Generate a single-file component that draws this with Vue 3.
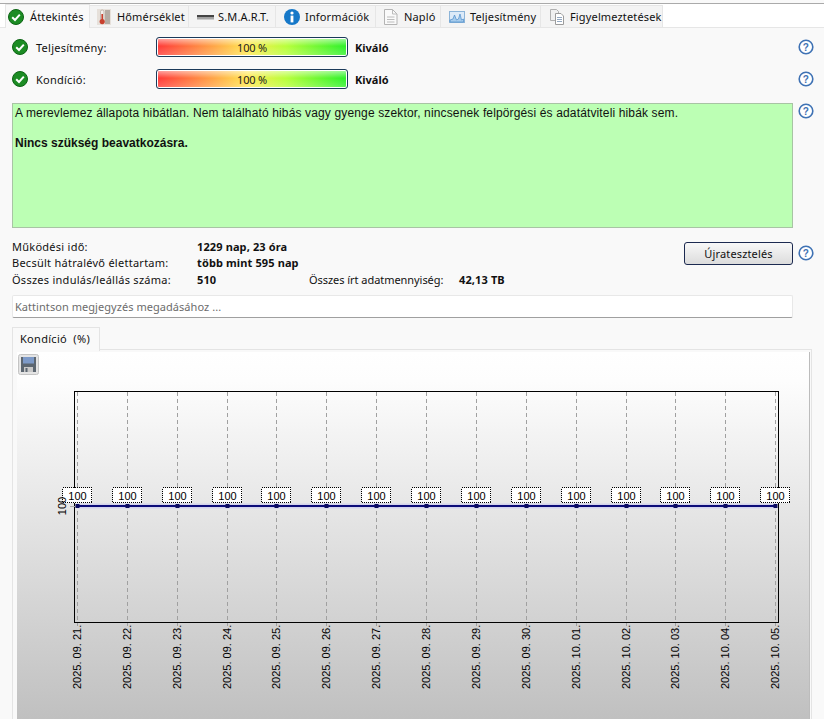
<script setup>
const tabs = [
  { label: 'Áttekintés', icon: 'ok', active: true },
  { label: 'Hőmérséklet', icon: 'temp' },
  { label: 'S.M.A.R.T.', icon: 'smart' },
  { label: 'Információk', icon: 'info' },
  { label: 'Napló', icon: 'doc' },
  { label: 'Teljesítmény', icon: 'perf' },
  { label: 'Figyelmeztetések', icon: 'copy' }
]
const rows = [{ label: 'Teljesítmény:' }, { label: 'Kondíció:' }]
const dates = ['2025. 09. 21.', '2025. 09. 22.', '2025. 09. 23.', '2025. 09. 24.', '2025. 09. 25.', '2025. 09. 26.', '2025. 09. 27.', '2025. 09. 28.', '2025. 09. 29.', '2025. 09. 30.', '2025. 10. 01.', '2025. 10. 02.', '2025. 10. 03.', '2025. 10. 04.', '2025. 10. 05.']
const xs = dates.map((_, i) => Math.round(60 + i * 49.87))
</script>

<template>
  <div class="page">
    <div class="tabbar">
      <div v-for="t in tabs" :key="t.label" class="tab" :class="[{ active: t.active }, 'tab-' + t.icon]">
        <svg v-if="t.icon === 'ok'" class="ico" viewBox="0 0 16 16"><circle cx="8" cy="8" r="7.5" fill="#1c8c24"/><circle cx="8" cy="8" r="7.5" fill="none" stroke="#0d6414"/><path d="M4.2 8.2 7 11l4.8-5.4" fill="none" stroke="#fff" stroke-width="2"/></svg>
        <svg v-else-if="t.icon === 'temp'" class="ico" viewBox="0 0 16 16"><rect x="1" y="0" width="14" height="16" fill="#e6e0da"/><rect x="9" y="1" width="5" height="14" fill="#b4aca4"/><rect x="4.5" y="1" width="3.4" height="11" rx="1.6" fill="#f4f0ec" stroke="#a89a90" stroke-width=".6"/><rect x="5.4" y="5" width="1.6" height="7" fill="#c8402e"/><circle cx="6.2" cy="12.6" r="2.6" fill="#c8402e"/></svg>
        <svg v-else-if="t.icon === 'smart'" class="ico" viewBox="0 0 16 16"><rect x="0" y="6" width="17" height="2.5" fill="#444"/><rect x="0" y="8.500" width="17" height="2" fill="#a4a4a4"/></svg>
        <svg v-else-if="t.icon === 'info'" class="ico" viewBox="0 0 16 16"><circle cx="8" cy="8" r="8" fill="#1678c8"/><circle cx="8" cy="4" r="1.6" fill="#fff"/><rect x="6.6" y="6.6" width="2.8" height="6.8" fill="#fff"/></svg>
        <svg v-else-if="t.icon === 'doc'" class="ico" viewBox="0 0 16 16"><path d="M1.500.5h8l4.500 4.500v10.500h-12.500z" fill="#fafafa" stroke="#b4b4b4"/><path d="M9.500.5v4.500h4.500M4 8h7.500M4 10.500h7.500M4 13h7.500" fill="none" stroke="#bcbcbc"/></svg>
        <svg v-else-if="t.icon === 'perf'" class="ico" viewBox="0 0 16 16"><rect x=".5" y="2.5" width="15" height="11" fill="#dceaf8" stroke="#8cb4d8"/><path d="M1 13V11l3-1 1.500-4 2 5 2-1 1.500-5 1.500 6 2-1v3z" fill="#a8ccec" stroke="#4a8ccc" stroke-width=".7"/></svg>
        <svg v-else class="ico" viewBox="0 0 16 16"><path d="M1.500.5h6l2 2v9h-8z" fill="#f0f0f0" stroke="#b0b0b0"/><path d="M6.500 4.500h5.500l2.500 2.500v8.500h-8z" fill="#fff" stroke="#9c9c9c"/><path d="M8 8.500h5M8 10.500h5M8 12.500h5" stroke="#94a8c0"/></svg>
        <span>{{ t.label }}</span>
      </div>
    </div>

    <div class="body">
      <div v-for="r in rows" :key="r.label" class="rate">
        <svg class="ok" viewBox="0 0 16 16"><circle cx="8" cy="8" r="7.500" fill="#1c8c24"/><circle cx="8" cy="8" r="7.500" fill="none" stroke="#0d6414"/><path d="M4.200 8.200 7 11l4.800-5.400" fill="none" stroke="#fff" stroke-width="2"/></svg>
        <span class="rate-label">{{ r.label }}</span>
        <div class="bar"><span>100 %</span></div>
        <b class="grade">Kiváló</b>
        <svg class="help" viewBox="0 0 16 16"><circle cx="8" cy="8" r="6.800" fill="#fff" stroke="#3f72b4" stroke-width="1.600"/><text x="8" y="11.500" text-anchor="middle" class="q">?</text></svg>
      </div>

      <div class="status-row">
        <div class="status">
          <p class="first">A merevlemez állapota hibátlan. Nem található hibás vagy gyenge szektor, nincsenek felpörgési és adatátviteli hibák sem.</p>
          <p class="strong">Nincs szükség beavatkozásra.</p>
        </div>
        <svg class="help" viewBox="0 0 16 16"><circle cx="8" cy="8" r="6.800" fill="#fff" stroke="#3f72b4" stroke-width="1.600"/><text x="8" y="11.500" text-anchor="middle" class="q">?</text></svg>
      </div>

      <div class="facts">
        <div class="fact-list">
          <div class="fact"><span class="k">Működési idő:</span><b class="v">1229 nap, 23 óra</b></div>
          <div class="fact"><span class="k">Becsült hátralévő élettartam:</span><b class="v">több mint 595 nap</b></div>
          <div class="fact"><span class="k">Összes indulás/leállás száma:</span><b class="v v-short">510</b><span class="k2">Összes írt adatmennyiség:</span><b class="v">42,13 TB</b></div>
        </div>
        <button class="retest">Újratesztelés</button>
        <svg class="help help-btn" viewBox="0 0 16 16"><circle cx="8" cy="8" r="6.800" fill="#fff" stroke="#3f72b4" stroke-width="1.600"/><text x="8" y="11.500" text-anchor="middle" class="q">?</text></svg>
      </div>

      <div class="note">Kattintson megjegyzés megadásához ...</div>

      <div class="subtab"><span>Kondíció &nbsp;(%)</span></div>
      <div class="panel">
        <div class="chart">
          <svg class="floppy" viewBox="0 0 21 21">
            <rect x=".5" y=".5" width="20" height="20" rx="2" fill="#e4e4e4" stroke="#c4c4c4"/>
            <path d="M3 3h15v15H3z" fill="#5c6670"/>
            <rect x="5" y="3" width="11" height="6.500" fill="#7d9ac8"/>
            <rect x="6" y="13" width="9" height="5" fill="#c8c8c8"/>
            <rect x="7.500" y="14" width="2" height="4" fill="#5c6670"/>
          </svg>
          <svg class="plot" width="793" height="367" viewBox="0 0 793 367">
            <defs>
              <linearGradient id="bg" x1="0" y1="0" x2="0" y2="1">
                <stop offset="0" stop-color="#ffffff"/>
                <stop offset=".08" stop-color="#fdfdfd"/>
                <stop offset="1" stop-color="#c0c0c0"/>
              </linearGradient>
            </defs>
            <rect width="793" height="367" fill="url(#bg)"/>
            <line x1="792.500" x2="792.500" y1="0" y2="367" stroke="#bcbcbc"/>
            <rect x="57.500" y="39.500" width="704" height="231" fill="none" stroke="#000"/>
            <g v-for="x in xs" :key="x">
              <line :x1="x + .5" :x2="x + .5" y1="40" y2="274" stroke="#a0a0a0" stroke-dasharray="4 3"/>
            </g>
            <line x1="53" x2="60" y1="154.500" y2="154.500" stroke="#aaa"/>
            <line x1="60" x2="759" y1="154" y2="154" stroke="#c8c8f0" stroke-width="5" opacity=".6"/>
            <line x1="60" x2="759" y1="154" y2="154" stroke="#0c0c78" stroke-width="2"/>
            <rect v-for="x in xs" :key="'m' + x" :x="x - 1.500" y="152" width="4" height="4" fill="#0c0c60"/>
            <g v-for="x in xs" :key="'l' + x">
              <rect :x="x - 14.500" y="135.500" width="29" height="15" fill="#fff" stroke="#000" stroke-dasharray="1 1" shape-rendering="crispEdges"/>
              <text :x="x + .5" y="147.500" text-anchor="middle" class="lbl">100</text>
            </g>
            <text transform="translate(49 154) rotate(-90)" text-anchor="middle" class="lbl">100</text>
            <text v-for="(d, i) in dates" :key="d" :transform="`translate(${xs[i] + 4} 337) rotate(-90)`" class="lbl">{{ d }}</text>
          </svg>
        </div>
      </div>
    </div>
  </div>
</template>

<style>
html, body { margin: 0; background: #f9f9f9; overflow: hidden; }
</style>

<style scoped>
.page {
  width: 824px; height: 716px; overflow: hidden; background: #f9f9f9; color: #111;
  font-family: "Noto Sans", "DejaVu Sans", sans-serif; font-size: 11px; letter-spacing: .3px;
  border-top: 1px solid #aaa; margin-top: 3px; box-sizing: border-box; position: relative;
}
.tabbar { display: flex; align-items: flex-end; height: 24px; padding-left: 5px; background: #fff; border-bottom: 1px solid #e6e6e6; box-sizing: border-box; letter-spacing: .15px; }
.tab { display: flex; align-items: center; gap: 5px; height: 22px; background: #f4f4f4; border: 1px solid #e6e6e6; border-bottom: 0; border-left: 0; box-sizing: border-box; white-space: nowrap; padding-left: 8px; }
.tab.active { height: 24px; background: #f9f9f9; margin-bottom: -1px; width: 85px; padding-left: 2px; gap: 6px; border-left: 1px solid #e6e6e6; }
.tab-temp { width: 99px; padding-left: 6px; }
.tab-smart { width: 87px; }
.tab-info { width: 100px; }
.tab-doc { width: 65px; padding-left: 7px; }
.tab-perf { width: 100px; }
.tab-copy { width: 122px; }
.ico { width: 16px; height: 16px; flex: none; overflow: visible; }
.body { padding: 9px 0 0 12px; }
.rate { display: flex; align-items: center; height: 20px; margin-bottom: 12px; }
.rate + .rate { margin-bottom: 14px; }
.ok { width: 16px; height: 16px; flex: none; }
.rate-label { width: 120px; margin-left: 8px; flex: none; letter-spacing: .25px; }
.bar {
  width: 192px; height: 20px; box-sizing: border-box; border: 1px solid #1b3a5a; border-radius: 3px; flex: none;
  display: flex; align-items: center; justify-content: center; color: #222; letter-spacing: -.2px;
  background:
    linear-gradient(180deg, rgba(255,255,255,.6) 0, rgba(255,255,255,.05) 45%, rgba(255,255,255,.25) 100%) padding-box,
    linear-gradient(90deg, #ff2e2e 0, #ff9a3c 28%, #ffe84a 48%, #b4ff30 68%, #20f020 100%) padding-box;
  box-shadow: inset 0 0 0 1px #fff;
}
.grade { margin-left: 7px; font-weight: 700; letter-spacing: 0; }
.help { width: 16px; height: 16px; flex: none; }
.rate .help { margin-left: auto; margin-right: 10px; }
.q { font: 700 10px "Liberation Sans", sans-serif; fill: #3f72b4; }
.status-row { display: flex; align-items: flex-start; gap: 5px; }
.status { width: 781px; height: 125px; box-sizing: border-box; border: 1px solid #a8c4a4; background: #bcffb4; padding: 2px 2px; }
.status p { margin: 0 0 15px; line-height: 15px; letter-spacing: 0; font-family: "Liberation Sans", sans-serif; font-size: 12px; }
.status .first { letter-spacing: .14px; }
.status .strong { font-weight: 700; }
.facts { display: flex; align-items: flex-start; margin-top: 10px; height: 52px; box-sizing: border-box; }
.fact-list { width: 672px; flex: none; }
.fact { display: flex; height: 16.500px; align-items: center; white-space: nowrap; }
.k { width: 185px; flex: none; letter-spacing: .26px; }
.v { font-weight: 700; letter-spacing: .12px; }
.v-short { width: 112px; flex: none; }
.k2 { width: 150px; flex: none; letter-spacing: -.05px; }
.retest { width: 109px; height: 23px; margin-top: 4px; box-sizing: border-box; border: 1px solid #1c2a50; border-radius: 3px; background: linear-gradient(180deg, #f8f8f8, #dcdcdc); font: inherit; letter-spacing: .15px; color: #111; padding: 0; }
.help-btn { margin: 7px 0 0 5px; }
.note { width: 781px; height: 23px; box-sizing: border-box; margin-top: 5px; background: #fff; border: 1px solid #e8e8e8; border-bottom: 1px solid #a0a0a0; border-radius: 2px; color: #6c6c6c; padding: 3px 2px; letter-spacing: .05px; }
.subtab { width: 88px; height: 24px; margin-top: 9px; box-sizing: border-box; background: #f9f9f9; border: 1px solid #e4e4e4; border-bottom: 0; padding: 3px 7px; position: relative; z-index: 1; }
.panel { width: 800px; height: 380px; box-sizing: border-box; margin-top: -2px; border-top: 1px solid #e4e4e4; border-right: 1px solid #e4e4e4; border-left: 1px solid #e4e4e4; padding: 2px 0 0 4px; }
.chart { position: relative; width: 793px; }
.floppy { position: absolute; left: 1px; top: 2px; width: 21px; height: 21px; }
.plot { display: block; }
.lbl { font: 11px "Liberation Sans", sans-serif; fill: #000; letter-spacing: 0; }
</style>
